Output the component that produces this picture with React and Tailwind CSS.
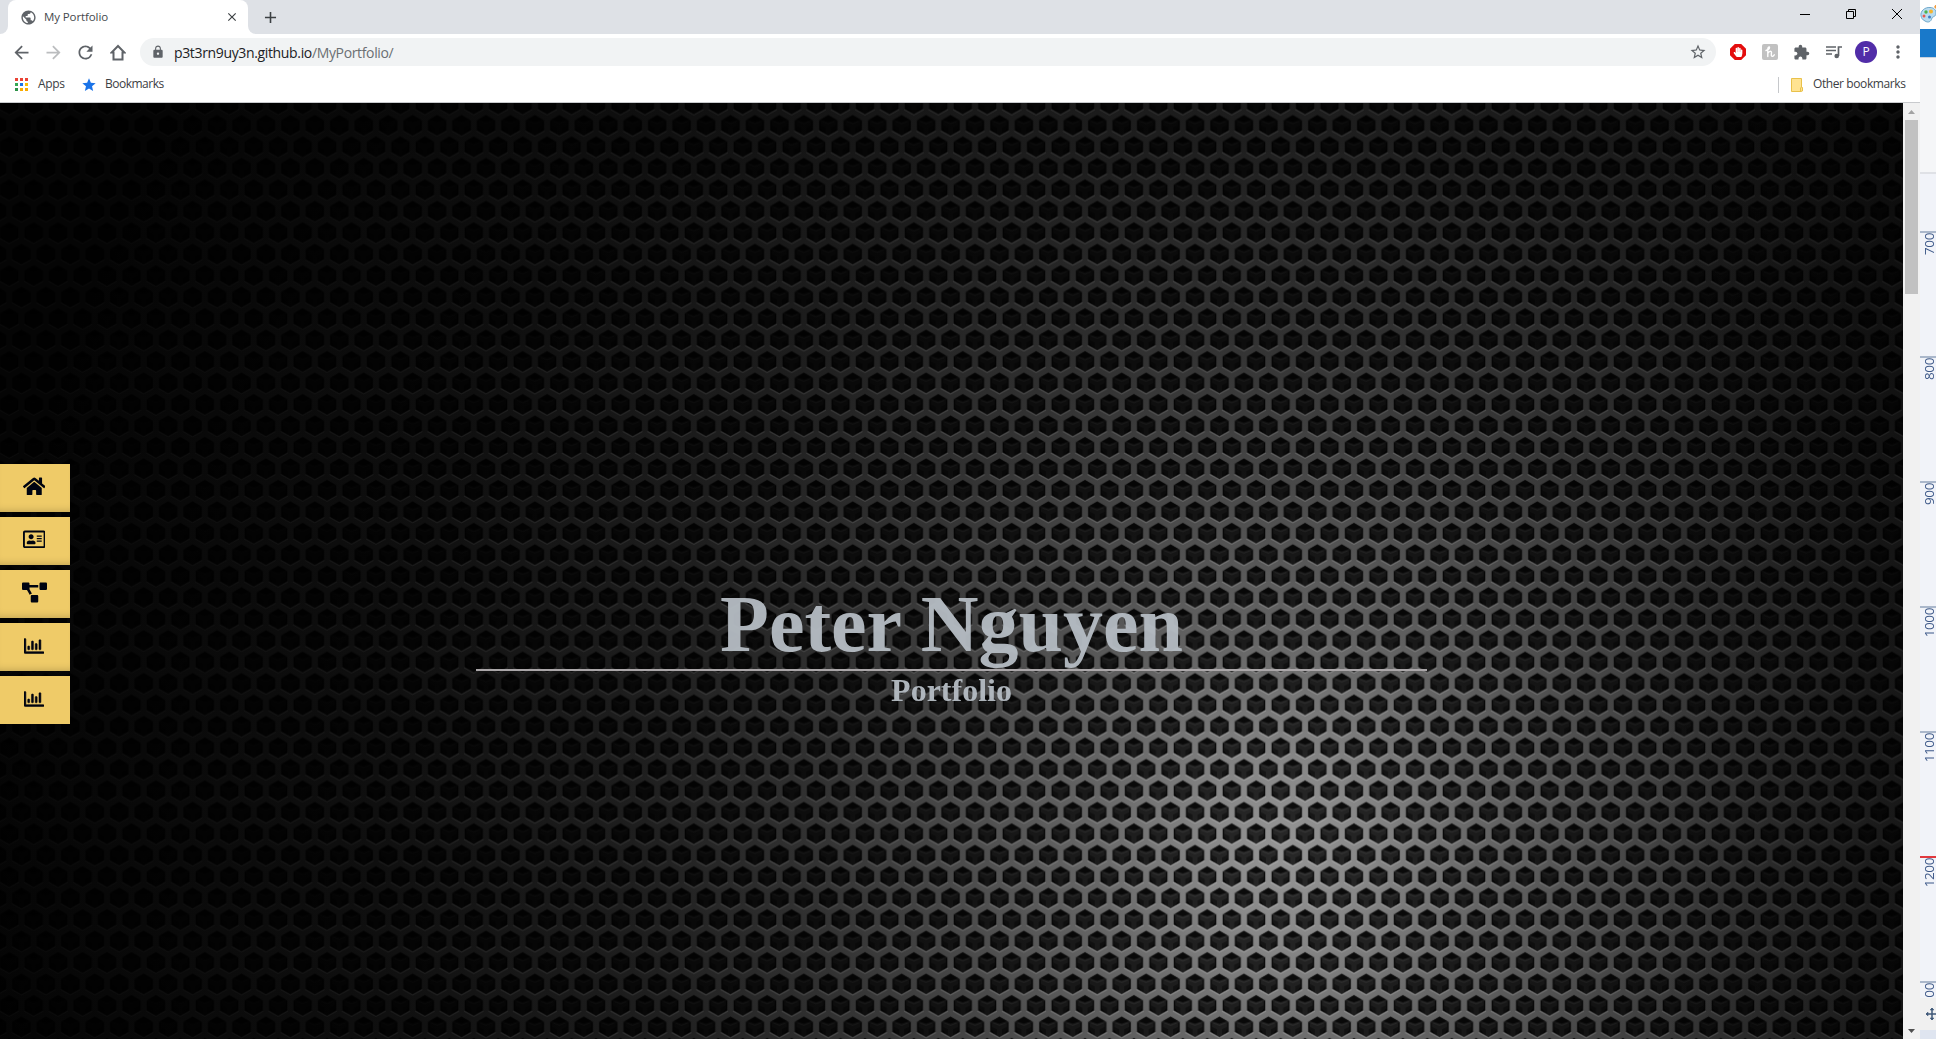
import React from "react";
import {
  MdArrowBack,
  MdArrowForward,
  MdRefresh,
  MdLock,
  MdStarBorder,
  MdExtension,
  MdMoreVert,
  MdPublic,
  MdClose,
  MdAdd,
  MdStar,
} from "react-icons/md";
import {
  FaHome,
  FaRegAddressCard,
  FaProjectDiagram,
  FaRegChartBar,
  FaHandPaper,
} from "react-icons/fa";

const UI_FONT = "font-['Open_Sans','Noto_Sans',sans-serif]";

function TabStrip() {
  return (
    <div className="flex h-[34px] bg-[#dee1e6]">
      <div className="flex w-2 items-end bg-white">
        <div className="h-full w-2 rounded-br-lg bg-[#dee1e6]" />
      </div>
      <div className="bg-[#dee1e6]">
        <div className="flex h-[34px] w-[240px] items-center rounded-t-lg bg-white pl-3">
          <MdPublic className="size-[17px] text-[#5f6368]" />
          <span className="ml-[7px] pb-px text-[11.5px] tracking-[-0.1px] whitespace-nowrap text-[#45494d]">My Portfolio</span>
          <MdClose className="mr-[9px] ml-auto size-[14px] text-[#3c4043]" />
        </div>
      </div>
      <div className="w-2 bg-white">
        <div className="h-full w-2 rounded-bl-lg bg-[#dee1e6]" />
      </div>
      <div className="flex w-[28px] items-center justify-center">
        <MdAdd className="size-[19px] text-[#3c4043]" />
      </div>
      <div className="ml-auto flex w-[138px] text-black">
        <div className="flex h-7 w-[46px] items-center justify-center">
          <div className="h-px w-[10px] bg-black" />
        </div>
        <div className="flex h-7 w-[46px] items-center justify-center">
          <svg width="10" height="10" viewBox="0 0 10 10" fill="none" stroke="currentColor">
            <path d="M.5 2.5h7v7h-7zM2.5 2.500V.5h7v7h-2" />
          </svg>
        </div>
        <div className="flex h-7 w-[46px] items-center justify-center">
          <svg width="10" height="10" viewBox="0 0 10 10" fill="none" stroke="currentColor">
            <path d="M0 0l10 10M10 0L0 10" />
          </svg>
        </div>
      </div>
    </div>
  );
}

function Slot({ children }) {
  return <div className="flex w-8 shrink-0 items-center justify-center text-[#5f6368]">{children}</div>;
}

function Toolbar() {
  return (
    <div className="flex h-9 items-center pl-[6px]">
      <Slot><MdArrowBack className="mr-px size-[21px]" /></Slot>
      <Slot><MdArrowForward className="mr-px size-[21px] text-[#bbbdbf]" /></Slot>
      <Slot><MdRefresh className="mr-px size-[21px]" /></Slot>
      <Slot>
        <svg width="16" height="17" viewBox="0 0 16 17" fill="none" stroke="currentColor" strokeWidth="2">
          <path d="M8 2L1.800 8.400H3.500V15.500H12.500V8.400H14.200z" />
        </svg>
      </Slot>
      <div className="ml-[6px] flex h-7 w-[1576px] items-center rounded-full bg-[#f1f3f4]">
        <MdLock className="ml-[11px] size-[14px] text-[#5f6368]" />
        <span className="ml-[9px] text-[14px] tracking-[-0.35px] text-[#202124]">
          p3t3rn9uy3n.github.io<span className="text-[#6b6f73]">/MyPortfolio/</span>
        </span>
        <MdStarBorder className="mr-[9px] ml-auto size-[18px] text-[#5f6368]" />
      </div>
      <div className="ml-[6px] flex">
        <Slot>
          <div className="flex size-4 items-center justify-center bg-[#e40d0d] text-white [clip-path:polygon(30%_0,70%_0,100%_30%,100%_70%,70%_100%,30%_100%,0_70%,0_30%)]">
            <FaHandPaper className="size-[10px]" />
          </div>
        </Slot>
        <Slot>
          <div className="flex size-4 items-center justify-center rounded-[2px] bg-[#c1c1c1]">
            <svg width="12" height="12" viewBox="0 0 12 12" fill="none" stroke="white" strokeWidth="1.400" strokeLinecap="round">
              <path d="M2 4.500C4 4 5.500 2.500 5.500 1.500S3.800.8 3.800 3V10.500M3.800 7.500C5 5 7.500 4.500 7.500 6.500C7.500 8 6.500 10 8 10.300C9.200 10.500 10 9.500 10.300 8.800" />
            </svg>
          </div>
        </Slot>
        <Slot><MdExtension className="mr-px size-[17px]" /></Slot>
        <Slot>
          <svg width="16" height="14" viewBox="0 0 16 14" fill="none" stroke="currentColor" strokeWidth="1.700">
            <path d="M0 2H10M0 5.500H10M0 9H6M12.500 11V2H16" />
            <circle cx="10.700" cy="11" r="2.300" fill="currentColor" stroke="none" />
          </svg>
        </Slot>
        <Slot>
          <div className="flex size-[22px] items-center justify-center rounded-full bg-[#512da8] text-[12px] text-white">P</div>
        </Slot>
        <Slot><MdMoreVert className="size-[20px]" /></Slot>
      </div>
    </div>
  );
}

const APP_DOTS = [
  "bg-[#ea4335]", "bg-[#ea4335]", "bg-[#ea4335]",
  "bg-[#34a853]", "bg-[#1a73e8]", "bg-[#fbbc04]",
  "bg-[#2d9248]", "bg-[#f9ab00]", "bg-[#f9ab00]",
];

function BookmarksBar() {
  return (
    <div className="flex h-[33px] items-center border-b border-[#c8cacd] pb-[3px] pl-[15px] text-[12px] text-[#3c4043]">
      <div className="grid grid-cols-3 gap-[2px]">
        {APP_DOTS.map((c, i) => (
          <div key={i} className={`size-[3px] ${c}`} />
        ))}
      </div>
      <span className="ml-[10px] w-[27px] pb-px tracking-[-0.3px]">Apps</span>
      <MdStar className="ml-[16px] size-[16px] text-[#1a73e8]" />
      <span className="ml-[8px] pb-px tracking-[-0.5px]">Bookmarks</span>
      <div className="mr-[15px] ml-auto flex items-center">
        <div className="h-4 w-px bg-[#c6c8cb]" />
        <svg className="ml-3" width="12" height="14" viewBox="0 0 12 14">
          <path d="M.5.5h10v9h1v3.500h-1v.5H.500z" fill="#ffe391" stroke="#e9c14a" />
          <path d="M9.500 13.500v-4" stroke="#e9c14a" />
        </svg>
        <span className="ml-[10px] w-[92px] pb-px tracking-[-0.4px] whitespace-nowrap">Other bookmarks</span>
      </div>
    </div>
  );
}

/* One hexagonal hole, shaded so its walls read as a cube, drawn around the origin. */
function Hole() {
  return (
    <g>
      <path d="M0-11L9.800-5.500V5.500L0 11L-9.800 5.500V-5.500z" fill="#000" fillOpacity=".12" />
      <path d="M0-10.200L8.900-5.100V5.100L0 10.200L-8.900 5.100V-5.100z" fill="#000" fillOpacity=".7" />
      <path d="M0-10L7.500-5.800L0-3.200L-7.500-5.800z" fill="#000" fillOpacity=".7" />
      <path d="M-8.900-4.500L-7.600-4V3L-4.500 7.400L-8.900 5z" fill="#000" fillOpacity=".7" />
      <path d="M8.900-4.500L7.600-4V3L4.500 7.400L8.900 5z" fill="#000" fillOpacity=".7" />
      <path d="M-7.600 0L-2.500 2.500V8.500L-7.600 5z" fill="#000" fillOpacity=".4" />
      <path d="M7.600 0L2.500 2.500V8.500L7.600 5z" fill="#000" fillOpacity=".4" />
    </g>
  );
}

/* Lit rims and inner cube edges of one hole. */
function Shine() {
  return (
    <g fill="none" stroke="#fff">
      <path d="M-9.800 5.800L0 11.200L9.800 5.800" strokeOpacity=".28" />
      <path d="M-6-3.800L0-1.500L6-3.800" strokeOpacity=".07" strokeWidth="1.200" />
    </g>
  );
}

function Lattice({ of: Cell }) {
  return (
    <>
      <g transform="translate(12.225 10.730)"><Cell /></g>
      <g transform="translate(12.225 53.660)"><Cell /></g>
      <g transform="translate(0 32.200)"><Cell /></g>
      <g transform="translate(24.450 32.200)"><Cell /></g>
      <g transform="translate(0 -10.730)"><Cell /></g>
      <g transform="translate(24.450 -10.730)"><Cell /></g>
    </>
  );
}

function MetalGrille() {
  return (
    <svg className="absolute inset-0 size-full" preserveAspectRatio="none">
      <defs>
        <radialGradient id="glow" gradientUnits="userSpaceOnUse" cx="0" cy="0" r="1300" gradientTransform="translate(1285 750) scale(1 1.100)">
          <stop offset="0" stopColor="#959595" />
          <stop offset=".06" stopColor="#888" />
          <stop offset=".15" stopColor="#666" />
          <stop offset=".26" stopColor="#484848" />
          <stop offset=".36" stopColor="#323232" />
          <stop offset=".5" stopColor="#1e1e1e" />
          <stop offset=".7" stopColor="#0f0f0f" />
          <stop offset="1" stopColor="#050505" />
        </radialGradient>
        <radialGradient id="lit" gradientUnits="userSpaceOnUse" cx="0" cy="0" r="1100" gradientTransform="translate(1285 750) scale(1 1.100)">
          <stop offset="0" stopColor="#fff" />
          <stop offset=".4" stopColor="#888" />
          <stop offset="1" stopColor="#181818" />
        </radialGradient>
        <linearGradient id="edge" gradientUnits="userSpaceOnUse" x1="1650" y1="0" x2="1903" y2="0">
          <stop offset="0" stopColor="#000" stopOpacity="0" />
          <stop offset="1" stopColor="#000" stopOpacity=".3" />
        </linearGradient>
        <pattern id="holes" patternUnits="userSpaceOnUse" x="9.225" y="11.570" width="24.450" height="42.930">
          <Lattice of={Hole} />
        </pattern>
        <pattern id="shine" patternUnits="userSpaceOnUse" x="9.225" y="11.570" width="24.450" height="42.930">
          <Lattice of={Shine} />
        </pattern>
        <mask id="litMask" maskUnits="userSpaceOnUse" x="0" y="0" width="1903" height="936">
          <rect width="1903" height="936" fill="url(#lit)" />
        </mask>
      </defs>
      <rect width="100%" height="100%" fill="url(#glow)" />
      <rect width="100%" height="100%" fill="url(#holes)" />
      <rect width="100%" height="100%" fill="url(#shine)" mask="url(#litMask)" />
      <rect width="100%" height="100%" fill="url(#edge)" />
    </svg>
  );
}

const NAV = [
  { Icon: FaHome, size: "size-[22.5px]" },
  { Icon: FaRegAddressCard, size: "size-[22.5px]" },
  { Icon: FaProjectDiagram, size: "size-[25px]" },
  { Icon: FaRegChartBar, size: "size-5 stroke-[#000411] stroke-[14px]" },
  { Icon: FaRegChartBar, size: "size-5 stroke-[#000411] stroke-[14px]" },
];

function Page() {
  return (
    <main className="relative h-full w-[1903px] overflow-hidden bg-black">
      <MetalGrille />
      <nav className="absolute top-[361px] left-0 flex flex-col gap-[5px]">
        {NAV.map(({ Icon, size }, i) => (
          <a
            key={i}
            className="flex h-12 w-[70px] items-center justify-center bg-[#efcb68] pr-[2px] pb-[3px] text-[#000411] shadow-[inset_0_-7px_9px_-7px_rgba(0,0,0,0.25)] last:shadow-none"
          >
            <Icon className={size} />
          </a>
        ))}
      </nav>
      <div className="relative mx-auto flex w-[951px] flex-col items-center pt-[476px] font-['Liberation_Serif',serif] font-bold text-[#b6bdc4]">
        <h1 className="text-[80px] leading-[90px] opacity-95">Peter Nguyen</h1>
        <div className="h-[2px] w-full bg-[#aaa6a8]" />
        <h2 className="mt-px text-[32px] leading-[37px] opacity-95">Portfolio</h2>
      </div>
    </main>
  );
}

function Scrollbar() {
  return (
    <div className="flex h-full w-[17px] flex-col items-center bg-[#f1f1f1]">
      <div className="flex h-[17px] items-center">
        <svg width="7" height="4" viewBox="0 0 7 4"><path d="M0 4L3.500 0L7 4z" fill="#a3a3a3" /></svg>
      </div>
      <div className="h-[174px] w-[13px] bg-[#c1c1c1]" />
      <div className="mt-auto flex h-[17px] items-center">
        <svg width="7" height="4" viewBox="0 0 7 4"><path d="M0 0L3.500 4L7 0z" fill="#505050" /></svg>
      </div>
    </div>
  );
}

const RULER = ["700", "800", "900", "1000", "1100", "1200", "00"];

function RulerStrip() {
  return (
    <aside className="flex h-full w-4 flex-col overflow-hidden bg-[#f5f6f8]">
      <div className="h-[29px] shrink-0 bg-white pt-[5px]">
        <svg width="16" height="18" viewBox="0 0 16 18">
          <path d="M1 11C0 6 5 2 10 2.500C14 2.500 16 5 16 8C16 12 13 11 12 13C11 17 8 18 5 16C2 14.500 1.500 13 1 11z" fill="#b9dcf0" stroke="#6fa8cb" />
          <circle cx="4" cy="11" r="1.500" fill="#e8584f" />
          <circle cx="6" cy="7" r="1.700" fill="#4db34d" />
          <circle cx="11" cy="6.500" r="2" fill="#f5b52e" />
          <circle cx="9.500" cy="12" r="1.500" fill="#3e7fc4" />
          <path d="M14 2l2-3v5z" fill="#ef9a3c" />
        </svg>
      </div>
      <div className="h-7 shrink-0 bg-[#1979ca]" />
      <div className="h-[117px] shrink-0 border-t border-b-2 border-t-[#c9d3de] border-b-[#dfe1e6]" />
      <div className="flex h-[824px] shrink-0 flex-col overflow-hidden bg-[#f1f3f9] pt-[57px]">
        {RULER.map((n) => (
          <div
            key={n}
            className={`h-[125px] shrink-0 border-t-2 ${n === "1200" ? "border-[#e0383e]" : "border-[#aab7cb]"}`}
          >
            <div className="ml-[3px] w-3 rotate-180 text-[13.5px] leading-[12px] tracking-[-0.4px] text-[#3f5a8a] [writing-mode:vertical-rl]">
              {n}
            </div>
          </div>
        ))}
      </div>
      <div className="h-8 shrink-0 bg-[#f0f0f0] pt-[9px] pl-[5px]">
        <svg width="14" height="14" viewBox="0 0 14 14" stroke="#3f5878" strokeWidth="1.500" fill="#3f5878">
          <path d="M7 1V13M1 7H13" />
          <path d="M5 3L7 1L9 3zM5 11L7 13L9 11zM3 5L1 7L3 9z" strokeWidth=".5" />
        </svg>
      </div>
      <div className="grow bg-[#dfe5f0]" />
    </aside>
  );
}

export default function App() {
  return (
    <div className={`flex h-[1039px] w-[1936px] overflow-hidden bg-white ${UI_FONT}`}>
      <div className="flex w-[1920px] shrink-0 flex-col">
        <TabStrip />
        <Toolbar />
        <BookmarksBar />
        <div className="flex h-[936px]">
          <Page />
          <Scrollbar />
        </div>
      </div>
      <RulerStrip />
    </div>
  );
}
